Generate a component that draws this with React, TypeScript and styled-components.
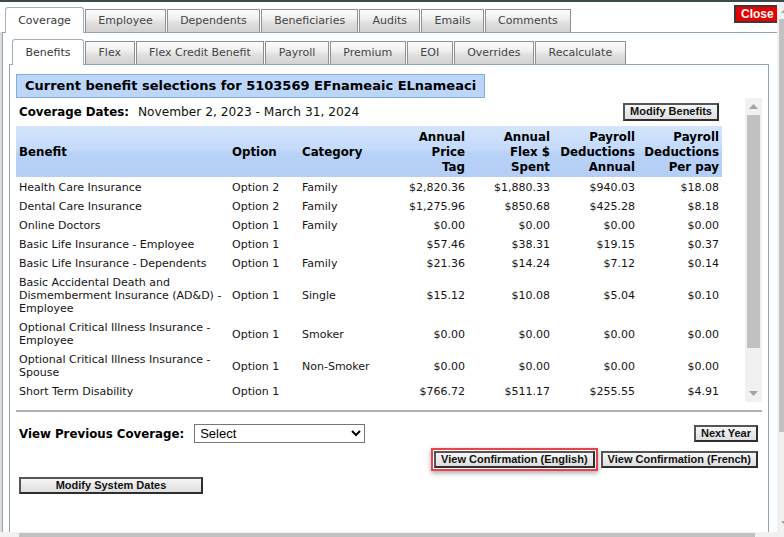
import * as React from "react";
import styled, { createGlobalStyle, css } from "styled-components";

const GlobalStyle = createGlobalStyle`
  html, body {
    margin: 0;
    padding: 0;
    background: #fff;
  }
  body {
    font-family: "DejaVu Sans", Verdana, sans-serif;
    font-size: 11px;
    color: #111;
  }
`;

const Page = styled.div`
  width: 784px;
  height: 537px;
  box-sizing: border-box;
  overflow: hidden;
  border-top: 2px solid #3b4b4b;
  display: grid;
  grid-template-columns: 777px 7px;
  grid-template-rows: 530px 5px;
`;

const Main = styled.div`
  display: flex;
  flex-direction: column;
  min-height: 0;
`;

const TopBar = styled.div`
  height: 30px;
  flex: none;
  display: flex;
  justify-content: space-between;
  align-items: flex-end;
  padding-left: 5px;
`;

const TabRow = styled.div<{ $inset?: number }>`
  display: flex;
  align-items: flex-end;
  padding-left: ${(p) => p.$inset || 0}px;
  position: relative;
  z-index: 1;
`;

const Tab = styled.div<{ $active?: boolean; $pad: number }>`
  box-sizing: border-box;
  height: 23px;
  line-height: 22px;
  padding: 0 ${(p) => p.$pad}px;
  margin-right: 1px;
  border: 1px solid #8e8e8e;
  border-bottom: none;
  color: #444;
  white-space: nowrap;
  background: linear-gradient(#fdfdfd, #efefef 40%, #dedede 60%, #d2d2d2);
  ${(p) =>
    p.$active &&
    css`
      height: 26px;
      padding-top: 2px;
      margin-bottom: -1px;
      background: #fff;
      border-color: #9fb0bd;
      border-radius: 3px 3px 0 0;
      color: #3a3a3a;
    `}
`;

const CloseButton = styled.button`
  align-self: flex-start;
  margin-top: 3px;
  width: 43px;
  height: 18px;
  padding: 0 0 0 5px;
  border: 2px solid #3a3a3a;
  border-right: none;
  background: #e80000;
  color: #fff;
  font-family: "Liberation Sans", Arial, sans-serif;
  font-weight: bold;
  font-size: 12px;
  line-height: 14px;
  text-align: left;
`;

const OuterPanel = styled.div`
  flex: 1;
  min-height: 0;
  display: flex;
  flex-direction: column;
  margin-left: 2px;
  border-top: 1px solid #8fa4b4;
  border-left: 1px solid #8fa4b4;
  box-shadow: -2px 0 0 #dcdcdc;
  padding: 6px 8px 0 6px;
`;

const InnerPanel = styled.div`
  flex: 1;
  min-height: 0;
  display: flex;
  flex-direction: column;
  border: 1px solid #8fa4b4;
  border-bottom: none;
  padding: 9px 6px 0 6px;
`;

const Title = styled.div`
  align-self: flex-start;
  box-sizing: border-box;
  height: 24px;
  line-height: 22px;
  padding: 0 8px;
  background: #bcd6fa;
  border: 1px solid #88aad9;
  font-weight: bold;
  font-size: 13px;
  color: #000;
`;

const ScrollArea = styled.div`
  height: 304px;
  display: flex;
  flex: none;
`;

const ScrollContent = styled.div`
  flex: 1;
  overflow: hidden;
`;

const VScroll = styled.div`
  width: 17px;
  background: #f1f1f1;
  display: flex;
  flex-direction: column;
`;

const ArrowBox = styled.div`
  height: 17px;
  display: flex;
  align-items: center;
  justify-content: center;
`;

const Thumb = styled.div<{ $size: number }>`
  margin: 0 2px;
  height: ${(p) => p.$size}px;
  background: #c1c1c1;
`;

const Spacer = styled.div`
  flex: 1;
`;

const DatesRow = styled.div`
  width: 706px;
  height: 28px;
  box-sizing: border-box;
  padding: 0 3px 1px;
  display: flex;
  align-items: center;
  justify-content: space-between;
`;

const DatesText = styled.div`
  display: flex;
  align-items: baseline;
`;

const Label = styled.span`
  font-weight: bold;
  font-size: 11.8px;
  color: #000;
`;

const DatesValue = styled.span`
  font-size: 12.2px;
  margin-left: 9px;
  color: #111;
`;

const Button = styled.button<{ $width?: number; $tall?: boolean }>`
  box-sizing: border-box;
  height: ${(p) => (p.$tall ? 18 : 17)}px;
  padding: 0 5px;
  ${(p) => p.$width && `width: ${p.$width}px;`}
  border: 2px solid #2e2e2e;
  border-top-color: #555;
  border-left-color: #555;
  background: linear-gradient(#f6f6f6, #dedede);
  font-family: "Liberation Sans", Arial, sans-serif;
  font-weight: bold;
  font-size: 11px;
  line-height: 13px;
  color: #111;
  white-space: nowrap;
`;

const Table = styled.table`
  width: 706px;
  table-layout: fixed;
  border-collapse: collapse;
`;

const HeadRow = styled.tr`
  background: linear-gradient(#d4e5fc, #c4dafa 45%, #b7d1f7 55%, #b4cef6);
`;

const Th = styled.th<{ $num?: boolean }>`
  height: 51px;
  box-sizing: border-box;
  padding: 3px 3px 2px;
  line-height: 15px;
  font-size: 11.8px;
  font-weight: bold;
  color: #000;
  vertical-align: middle;
  text-align: ${(p) => (p.$num ? "right" : "left")};
`;

const Td = styled.td<{ $num?: boolean }>`
  padding: 4px 3px 2px;
  line-height: 13px;
  vertical-align: middle;
  color: #141414;
  text-align: ${(p) => (p.$num ? "right" : "left")};
`;

const Separator = styled.div`
  margin-top: 8px;
  height: 2px;
  background: #b2b2b2;
`;

const Controls = styled.div`
  padding: 0 4px 0 3px;
  display: flex;
  flex-direction: column;
`;

const ControlRow = styled.div<{ $top: number; $align?: string }>`
  margin-top: ${(p) => p.$top}px;
  display: flex;
  align-items: center;
  justify-content: ${(p) => p.$align || "space-between"};
  gap: 3px;
`;

const SelectGroup = styled.div`
  display: flex;
  align-items: center;
`;

const Select = styled.select`
  margin-left: 10px;
  width: 171px;
  height: 19px;
  padding: 0 1px;
  border: 1px solid #767676;
  border-radius: 0;
  background: #fff;
  font-family: "Liberation Sans", Arial, sans-serif;
  font-size: 13px;
  color: #000;
`;

const Highlight = styled.div`
  border: 2px solid #e8434b;
  padding: 1px;
  display: flex;
  box-shadow: 0 2px 5px rgba(0, 0, 0, 0.35);
`;

const RightScroll = styled.div`
  background: #f1f1f1;
  overflow: hidden;
  display: flex;
  flex-direction: column;
`;

const RightInner = styled.div`
  width: 17px;
  height: 100%;
  display: flex;
  flex-direction: column;
`;

const HScroll = styled.div`
  grid-column: 1 / 3;
  background: #f1f1f1;
  padding: 1px 0 0 19px;
  box-sizing: border-box;
`;

const HThumb = styled.div`
  width: 736px;
  height: 4px;
  background: #c1c1c1;
`;

const Triangle = ({ down }: { down?: boolean }) => (
  <svg width="9" height="5" viewBox="0 0 9 5">
    <path d={down ? "M0 0h9L4.5 5z" : "M0 5h9L4.5 0z"} fill="#a3a3a3" />
  </svg>
);

const outerTabs = [
  "Coverage",
  "Employee",
  "Dependents",
  "Beneficiaries",
  "Audits",
  "Emails",
  "Comments",
];

const innerTabs = [
  "Benefits",
  "Flex",
  "Flex Credit Benefit",
  "Payroll",
  "Premium",
  "EOI",
  "Overrides",
  "Recalculate",
];

const rows = [
  ["Health Care Insurance", "Option 2", "Family", "$2,820.36", "$1,880.33", "$940.03", "$18.08"],
  ["Dental Care Insurance", "Option 2", "Family", "$1,275.96", "$850.68", "$425.28", "$8.18"],
  ["Online Doctors", "Option 1", "Family", "$0.00", "$0.00", "$0.00", "$0.00"],
  ["Basic Life Insurance - Employee", "Option 1", "", "$57.46", "$38.31", "$19.15", "$0.37"],
  ["Basic Life Insurance - Dependents", "Option 1", "Family", "$21.36", "$14.24", "$7.12", "$0.14"],
  ["Basic Accidental Death and Dismemberment Insurance (AD&D) - Employee", "Option 1", "Single", "$15.12", "$10.08", "$5.04", "$0.10"],
  ["Optional Critical Illness Insurance - Employee", "Option 1", "Smoker", "$0.00", "$0.00", "$0.00", "$0.00"],
  ["Optional Critical Illness Insurance - Spouse", "Option 1", "Non-Smoker", "$0.00", "$0.00", "$0.00", "$0.00"],
  ["Short Term Disability", "Option 1", "", "$766.72", "$511.17", "$255.55", "$4.91"],
];

const widths = [213, 70, 85, 84, 85, 85, 84];

const App: React.FC = () => {
  return (
    <Page>
      <GlobalStyle />
      <Main>
        <TopBar>
          <TabRow>
            {outerTabs.map((t, i) => (
              <Tab key={t} $pad={12.2} $active={i === 0}>
                {t}
              </Tab>
            ))}
          </TabRow>
          <CloseButton>Close</CloseButton>
        </TopBar>
        <OuterPanel>
          <TabRow $inset={3}>
            {innerTabs.map((t, i) => (
              <Tab key={t} $pad={12.5} $active={i === 0}>
                {t}
              </Tab>
            ))}
          </TabRow>
          <InnerPanel>
            <Title>Current benefit selections for 5103569 EFnameaic ELnameaci</Title>
            <ScrollArea>
              <ScrollContent>
                <DatesRow>
                  <DatesText>
                    <Label>Coverage Dates:</Label>
                    <DatesValue>November 2, 2023 - March 31, 2024</DatesValue>
                  </DatesText>
                  <Button $tall>Modify Benefits</Button>
                </DatesRow>
                <Table>
                  <colgroup>
                    {widths.map((w, i) => (
                      <col key={i} style={{ width: w }} />
                    ))}
                  </colgroup>
                  <thead>
                    <HeadRow>
                      <Th>Benefit</Th>
                      <Th>Option</Th>
                      <Th>Category</Th>
                      <Th $num>
                        Annual
                        <br />
                        Price
                        <br />
                        Tag
                      </Th>
                      <Th $num>
                        Annual
                        <br />
                        Flex $
                        <br />
                        Spent
                      </Th>
                      <Th $num>
                        Payroll
                        <br />
                        Deductions
                        <br />
                        Annual
                      </Th>
                      <Th $num>
                        Payroll
                        <br />
                        Deductions
                        <br />
                        Per pay
                      </Th>
                    </HeadRow>
                  </thead>
                  <tbody>
                    {rows.map((r, i) => (
                      <tr key={i}>
                        {r.map((c, j) => (
                          <Td key={j} $num={j > 2}>
                            {c}
                          </Td>
                        ))}
                      </tr>
                    ))}
                  </tbody>
                </Table>
              </ScrollContent>
              <VScroll>
                <ArrowBox>
                  <Triangle />
                </ArrowBox>
                <Thumb $size={233} />
                <Spacer />
                <ArrowBox>
                  <Triangle down />
                </ArrowBox>
              </VScroll>
            </ScrollArea>
            <Separator />
            <Controls>
              <ControlRow $top={12}>
                <SelectGroup>
                  <Label>View Previous Coverage:</Label>
                  <Select defaultValue="Select">
                    <option>Select</option>
                  </Select>
                </SelectGroup>
                <Button>Next Year</Button>
              </ControlRow>
              <ControlRow $top={5} $align="flex-end">
                <Highlight>
                  <Button>View Confirmation (English)</Button>
                </Highlight>
                <Button>View Confirmation (French)</Button>
              </ControlRow>
              <ControlRow $top={6} $align="flex-start">
                <Button $width={184}>Modify System Dates</Button>
              </ControlRow>
            </Controls>
          </InnerPanel>
        </OuterPanel>
      </Main>
      <RightScroll>
        <RightInner>
          <ArrowBox>
            <Triangle />
          </ArrowBox>
          <Thumb $size={413} />
          <Spacer />
          <ArrowBox>
            <Triangle down />
          </ArrowBox>
        </RightInner>
      </RightScroll>
      <HScroll>
        <HThumb />
      </HScroll>
    </Page>
  );
};

export default App;
